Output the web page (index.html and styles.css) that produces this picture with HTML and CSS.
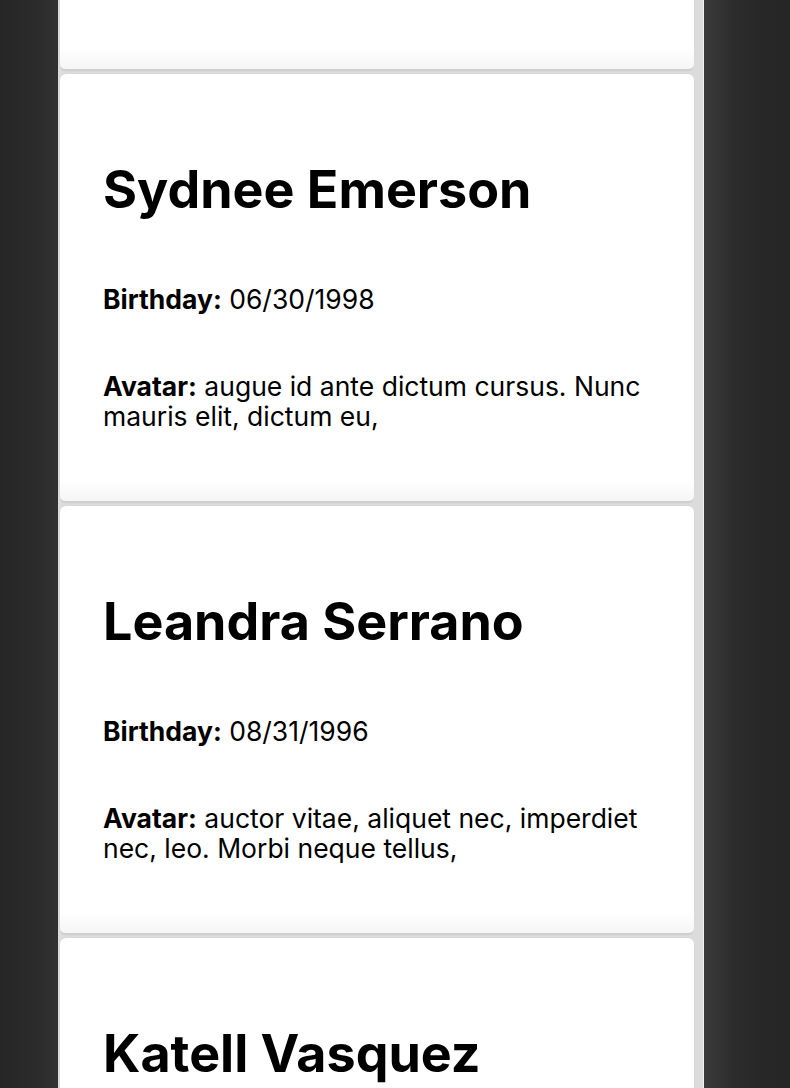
FILE: index.html
```html
<!DOCTYPE html>
<html lang="en">
<head>
<meta charset="utf-8">
<title>People</title>
<link rel="stylesheet" href="styles.css">
</head>
<body>
<div class="page">
  <div class="side side-left"></div>
  <main class="column">
    <div class="list">
      <article class="card card-partial" aria-hidden="true"></article>
      <article class="card">
        <h2 class="name">Sydnee Emerson</h2>
        <p class="field"><strong>Birthday:</strong> 06/30/1998</p>
        <p class="field"><strong>Avatar:</strong> augue id ante dictum cursus. Nunc mauris elit, dictum eu,</p>
      </article>
      <article class="card">
        <h2 class="name">Leandra Serrano</h2>
        <p class="field"><strong>Birthday:</strong> 08/31/1996</p>
        <p class="field"><strong>Avatar:</strong> auctor vitae, aliquet nec, imperdiet nec, leo. Morbi neque tellus,</p>
      </article>
      <article class="card">
        <h2 class="name">Katell Vasquez</h2>
      </article>
    </div>
  </main>
  <div class="side side-right"></div>
</div>
</body>
</html>
```

FILE: styles.css
```css
html, body {
  margin: 0;
  padding: 0;
  height: 100%;
  overflow: hidden;
}

body {
  background: #292929;
  font-family: Inter, "Noto Sans", "Liberation Sans", sans-serif;
  color: #000;
}

.page {
  display: grid;
  grid-template-columns: 58px 646px 1fr;
  height: 100%;
}

.side-left {
  background: linear-gradient(to right, #262626 0%, #2b2b2b 60%, #323232 100%);
}

.side-right {
  background: linear-gradient(to right, #3b3b3b 0px, #2c2c2c 30px, #272727 60px, #262626 100%);
}

.column {
  background: #dcdcdc;
  padding: 0 9px 0 2px;
  border-right: 1px solid #f2f2f2;
  overflow: hidden;
}

.list {
  display: flex;
  flex-direction: column;
  gap: 3px;
}

.card {
  background: linear-gradient(to bottom, #ffffff 0, #ffffff calc(100% - 22px), #f6f6f6 100%);
  border-radius: 6px;
  border-bottom: 2px solid #cfcfcf;
  padding: 86px 43px 70px;
  box-shadow: 0 0 1px rgba(0, 0, 0, 0.12);
}

.card-partial {
  height: 69px;
  padding: 0;
  border-top-left-radius: 0;
  border-top-right-radius: 0;
}

.name {
  margin: 0 0 64px;
  font-size: 52px;
  line-height: 60px;
  font-weight: 700;
}

.field {
  margin: 0 0 57px;
  font-size: 26.5px;
  line-height: 30px;
}

.field:last-child {
  margin-bottom: 0;
  min-height: 60px;
}

.field strong {
  font-weight: 700;
}
```
